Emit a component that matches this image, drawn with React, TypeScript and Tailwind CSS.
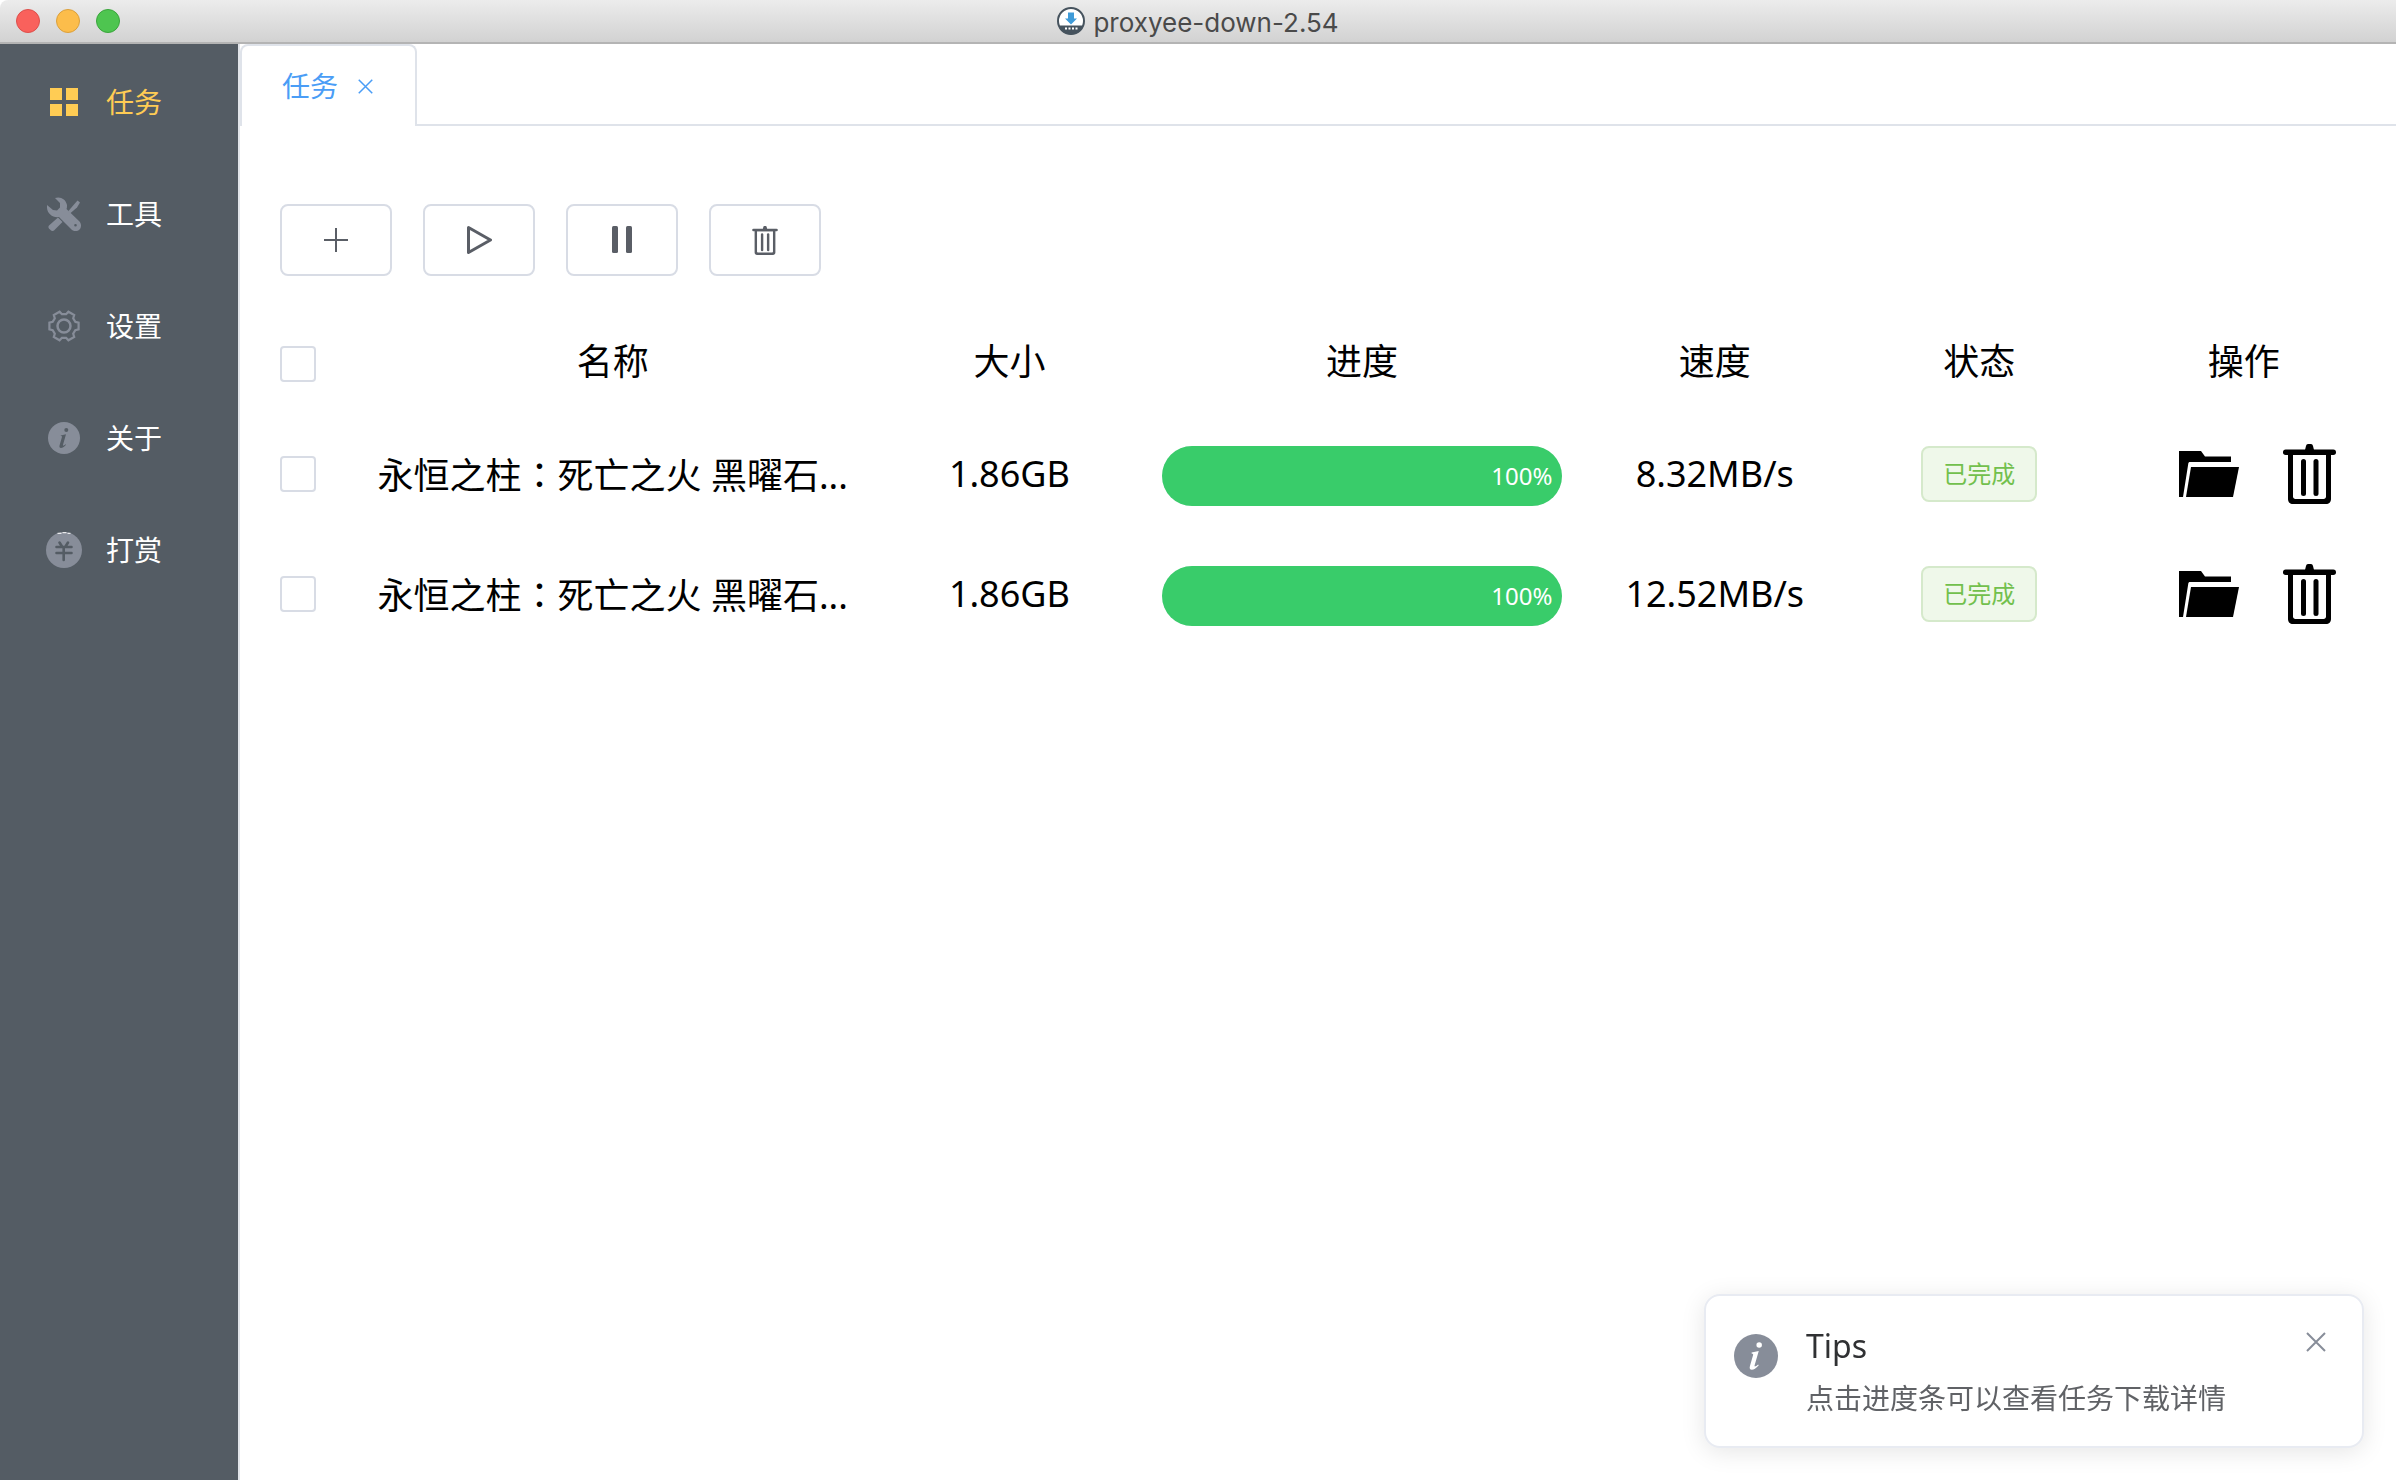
import type { ReactNode } from "react";

function GridIcon() {
  return (
    <svg viewBox="0 0 28 28" className="w-7 h-7" fill="currentColor">
      <path d="M0 0h12v12H0zM16 0h12v12H16zM0 16h12v12H0zM16 16h12v12H16z" />
    </svg>
  );
}

function ToolsIcon() {
  return (
    <svg viewBox="0 0 34 34" className="w-[34px] h-[34px]" fill="currentColor">
      <path
        fillRule="evenodd"
        d="M8 1C13-1 19 2 20 8c0 2 0 3-.5 4L32.500 24.500c2 2.500 2 6 0 8s-5.500 2-8 0L12 20C6 21 .5 17 0 11V8l6 5 4 .5 3-3V6zM28.500 27a1.300 1.300 0 1 0 0 2.600 1.300 1.300 0 0 0 0-2.600z"
      />
      <path d="M30.500 3.500l2.500 2-3 5-7 6-2-2 6-7z" />
      <path d="M11 20.500l4.500 4.500-8.500 8.500c-1 .7-2 .7-3 0L2 31.500c-.8-1-.8-2 0-3z" />
    </svg>
  );
}

function GearIcon() {
  return (
    <svg viewBox="0 0 32 32" className="w-8 h-8" fill="none" stroke="currentColor" strokeWidth="2.200">
      <path d="M27.300 11.900l3.300.7v6.800l-3.300.7-2.100 3.600 1 3.300-5.800 3.300-2.300-2.500h-4.200l-2.300 2.500L5.800 27l1-3.300-2.100-3.600-3.300-.7v-6.800l3.300-.7 2.100-3.600-1-3.300 5.800-3.300 2.300 2.500h4.200l2.300-2.500L26.200 5l-1 3.300z" />
      <circle cx="16" cy="16" r="6.500" strokeWidth="2.500" />
    </svg>
  );
}

function InfoIcon({ className, mark }: { className: string; mark: string }) {
  return (
    <svg viewBox="0 0 32 32" className={className} fill="currentColor">
      <circle cx="16" cy="16" r="16" />
      <circle cx="18.300" cy="8" r="2" className={mark} />
      <path
        d="M12.800 13.500l5.200-1.200-3 10.500c-.3 1.200.5 1.200 2.500-.6l.5.600c-2 2.400-3.600 3.200-5 3.200-1.500 0-1.900-1.100-1.400-2.700l2.300-8c.2-.9-.1-1.100-1.100-1.200z"
        className={mark}
      />
    </svg>
  );
}

function YenIcon() {
  return (
    <svg viewBox="0 0 36 36" className="w-9 h-9" fill="none">
      <circle cx="18" cy="18" r="18" fill="currentColor" />
      <path d="M11.500 1.300h4M16.500.7h4M21.500 1.300h3" stroke="#fff" />
      <path
        d="M13.500 10.500l2.500 4M22 10.500l-2.500 4M10.500 15h15M10.500 21h15M17.700 15v13"
        stroke="#545c64"
        strokeWidth="2.600"
        strokeLinecap="round"
      />
    </svg>
  );
}

function TrashIcon({ className }: { className: string }) {
  return (
    <svg viewBox="0 0 53 60" className={className} fill="currentColor">
      <path d="M22 6l1-4c.3-1.300 1-2 2-2h3c1 0 1.700.7 2 2l1 4z" />
      <rect y="5.500" width="53" height="5.500" rx="2.700" />
      <path
        fillRule="evenodd"
        d="M5 9h43v46c0 3-2 5-5 5H10c-3 0-5-2-5-5zM10 11v41.500c0 1.500 1 2.500 2.500 2.500h28c1.500 0 2.500-1 2.500-2.500V11z"
      />
      <rect x="18" y="15" width="5" height="37" rx="2.500" />
      <rect x="30.500" y="15" width="5" height="37" rx="2.500" />
    </svg>
  );
}

function FolderIcon() {
  return (
    <svg viewBox="0 0 60 46" className="w-[60px] h-[46px]" fill="currentColor">
      <path d="M0 0h22l4 5.500h26V11H11c-1 0-1.500.5-1.700 1.500L4 46H0z" />
      <path d="M12 16h48l-6 30H7z" />
    </svg>
  );
}

function CrossIcon({ className }: { className: string }) {
  return (
    <svg viewBox="0 0 20 20" className={className} fill="none" stroke="currentColor" strokeWidth="2">
      <path d="M1 1l18 18M19 1L1 19" />
    </svg>
  );
}

function AppLogo() {
  return (
    <svg viewBox="0 0 28 28" className="w-7 h-7">
      <circle cx="14" cy="14" r="13" fill="#fff" />
      <path d="M1.500 18.500h25A13 13 0 0 1 14 27.500 13 13 0 0 1 1.500 18.500z" fill="#46535e" />
      <circle cx="14" cy="14" r="13" fill="none" stroke="#46535e" strokeWidth="2" />
      <path d="M11 5.500h6v6h3L14 17.500 8 11.500h3z" fill="#3f9bd8" />
      <path d="M8 21.500h2M11.500 21.500h2M15 21.500h2M18.500 21.500h2" stroke="#fff" strokeWidth="2" />
    </svg>
  );
}

const menu: { label: string; icon: ReactNode }[] = [
  { label: "任务", icon: <GridIcon /> },
  { label: "工具", icon: <ToolsIcon /> },
  { label: "设置", icon: <GearIcon /> },
  { label: "关于", icon: <InfoIcon className="w-8 h-8" mark="fill-[#545c64]" /> },
  { label: "打赏", icon: <YenIcon /> },
];

const actions: { label: string; icon: ReactNode }[] = [
  {
    label: "新建任务",
    icon: (
      <svg viewBox="0 0 24 24" className="w-6 h-6" stroke="currentColor" strokeWidth="2">
        <path d="M12 0v24M0 12h24" />
      </svg>
    ),
  },
  {
    label: "开始",
    icon: (
      <svg
        viewBox="0 0 26 28"
        className="w-[26px] h-7"
        fill="none"
        stroke="currentColor"
        strokeWidth="3"
        strokeLinejoin="round"
      >
        <path d="M2.500 1.500l22 12.500-22 12.500z" />
      </svg>
    ),
  },
  {
    label: "暂停",
    icon: (
      <svg viewBox="0 0 20 28" className="w-5 h-7" fill="currentColor">
        <rect width="6" height="27" rx="1.500" />
        <rect x="14" width="6" height="27" rx="1.500" />
      </svg>
    ),
  },
  { label: "删除", icon: <TrashIcon className="w-[26px] h-[29px]" /> },
];

const tasks = [
  { id: 1, name: ["永恒之柱", "死亡之火 黑曜石..."], size: "1.86GB", progress: 100, speed: "8.32MB/s", status: "已完成" },
  { id: 2, name: ["永恒之柱", "死亡之火 黑曜石..."], size: "1.86GB", progress: 100, speed: "12.52MB/s", status: "已完成" },
];

function Checkbox({ label }: { label: string }) {
  return (
    <input
      type="checkbox"
      aria-label={label}
      className="block w-9 h-9 appearance-none rounded border-2 border-[#d8dce5] bg-white checked:bg-[#409eff]"
    />
  );
}

function TitleBar() {
  return (
    <header className="flex items-center h-11 px-4 rounded-tl-lg border-b-2 border-[#b4b4b4] bg-linear-to-b from-[#ececec] to-[#d2d2d2]">
      <div className="flex flex-1 gap-4">
        <button aria-label="关闭" className="w-6 h-6 rounded-full border border-[#dd4f4b] bg-[#f9615c]" />
        <button aria-label="最小化" className="w-6 h-6 rounded-full border border-[#dba03c] bg-[#fcbd4b]" />
        <button aria-label="最大化" className="w-6 h-6 rounded-full border border-[#3aa53c] bg-[#4ec550]" />
      </div>
      <div className="flex items-center gap-2">
        <AppLogo />
        <h1 className="pt-1 font-['Inter',sans-serif] text-[26px] leading-8 text-[#4a4a4a]">proxyee-down-2.54</h1>
      </div>
      <div className="flex-1" />
    </header>
  );
}

function Sidebar() {
  return (
    <nav className="w-60 shrink-0 border-r-2 border-[#e2e5ea] bg-[#545c64] py-0.5">
      {menu.map((item, index) => (
        <a
          key={item.label}
          href="#"
          className={`flex items-center h-28 pl-10 gap-[18px] text-[28px] ${index === 0 ? "text-[#ffcc54]" : "text-white"}`}
        >
          <span className={`flex justify-center w-12 ${index === 0 ? "" : "text-[#878d99]"}`}>{item.icon}</span>
          {item.label}
        </a>
      ))}
    </nav>
  );
}

function TaskTable() {
  return (
    <div className="-mx-5 mt-8">
      <table className="w-full table-fixed text-center text-4xl text-black">
        <colgroup>
          <col className="w-1/24" />
          <col className="w-6/24" />
          <col className="w-3/24" />
          <col className="w-5/24" />
          <col className="w-3/24" />
          <col className="w-3/24" />
          <col className="w-3/24" />
        </colgroup>
        <thead>
          <tr className="h-27">
            <th className="pl-5 pt-1">
              <Checkbox label="全选" />
            </th>
            <th className="font-normal">名称</th>
            <th className="font-normal">大小</th>
            <th className="font-normal">进度</th>
            <th className="font-normal">速度</th>
            <th className="font-normal">状态</th>
            <th className="font-normal">操作</th>
          </tr>
        </thead>
        <tbody>
          {tasks.map((task) => (
            <tr key={task.id} className="h-30">
              <td className="pl-5 pb-1">
                <Checkbox label={`选择任务 ${task.id}`} />
              </td>
              <td className="px-5 pb-1 truncate">
                {task.name[0]}
                {/* 冒号居中显示 */}
                <span className="font-['Noto_Sans_CJK_TC',sans-serif]">：</span>
                {task.name[1]}
              </td>
              <td className="pb-1">{task.size}</td>
              <td className="px-5">
                <div className="h-15 rounded-full bg-[#ebeef5]">
                  <div
                    className="flex items-center justify-end h-full px-2.5 rounded-full bg-[#39cc6a] text-2xl text-white"
                    style={{ width: `${task.progress}%` }}
                  >
                    {task.progress}%
                  </div>
                </div>
              </td>
              <td className="pb-1">{task.speed}</td>
              <td className="pb-1">
                <span className="block w-29 mx-auto rounded-lg border-2 border-[#d5e9cb] bg-[#eff8ea] text-2xl leading-13 text-[#72c04d]">
                  {task.status}
                </span>
              </td>
              <td className="pb-1">
                <div className="flex items-center justify-end gap-11 pr-10">
                  <button aria-label="打开文件夹">
                    <FolderIcon />
                  </button>
                  <button aria-label="删除任务">
                    <TrashIcon className="w-[53px] h-15" />
                  </button>
                </div>
              </td>
            </tr>
          ))}
        </tbody>
      </table>
    </div>
  );
}

function Tips() {
  return (
    <aside className="fixed right-8 bottom-8 flex w-[660px] pl-7 pr-9 pt-[26px] pb-7 rounded-2xl border-2 border-[#e8ebf2] bg-white shadow-[0_4px_24px_rgba(0,0,0,0.1)]">
      <InfoIcon className="w-11 h-11 mt-3 text-[#878d99]" mark="fill-white" />
      <div className="flex-1 ml-7">
        <h2 className="text-[32px] leading-12 text-[#303133]">Tips</h2>
        <p className="mt-2 text-[28px] leading-10 text-[#606266]">点击进度条可以查看任务下载详情</p>
      </div>
      <button aria-label="关闭提示" className="self-start mt-2.5 text-[#878d99]">
        <CrossIcon className="w-5 h-5" />
      </button>
    </aside>
  );
}

export default function App() {
  return (
    <div className="flex flex-col min-h-screen bg-white font-['Noto_Sans','Noto_Sans_CJK_SC',sans-serif]">
      <TitleBar />
      <div className="flex flex-1">
        <Sidebar />
        <main className="flex-1 min-w-0">
          {/* 标签页 */}
          <div className="flex h-[82px]">
            <div className="flex items-center gap-5 pl-10 pr-[42px] rounded-t-lg border-2 border-b-0 border-[#dfe3ea] text-[#4a9df6]">
              <a href="#" className="text-[28px]">
                任务
              </a>
              <button aria-label="关闭标签">
                <CrossIcon className="w-[15px] h-[15px]" />
              </button>
            </div>
            <div className="flex-1 border-b-2 border-[#dfe3ea]" />
          </div>

          <div className="px-10 pt-[78px]">
            <div className="flex gap-[31px]">
              {actions.map((action) => (
                <button
                  key={action.label}
                  aria-label={action.label}
                  className="flex items-center justify-center w-28 h-18 rounded-lg border-2 border-[#d8dce5] text-[#5a5e66]"
                >
                  {action.icon}
                </button>
              ))}
            </div>
            <TaskTable />
          </div>
        </main>
      </div>
      <Tips />
    </div>
  );
}
